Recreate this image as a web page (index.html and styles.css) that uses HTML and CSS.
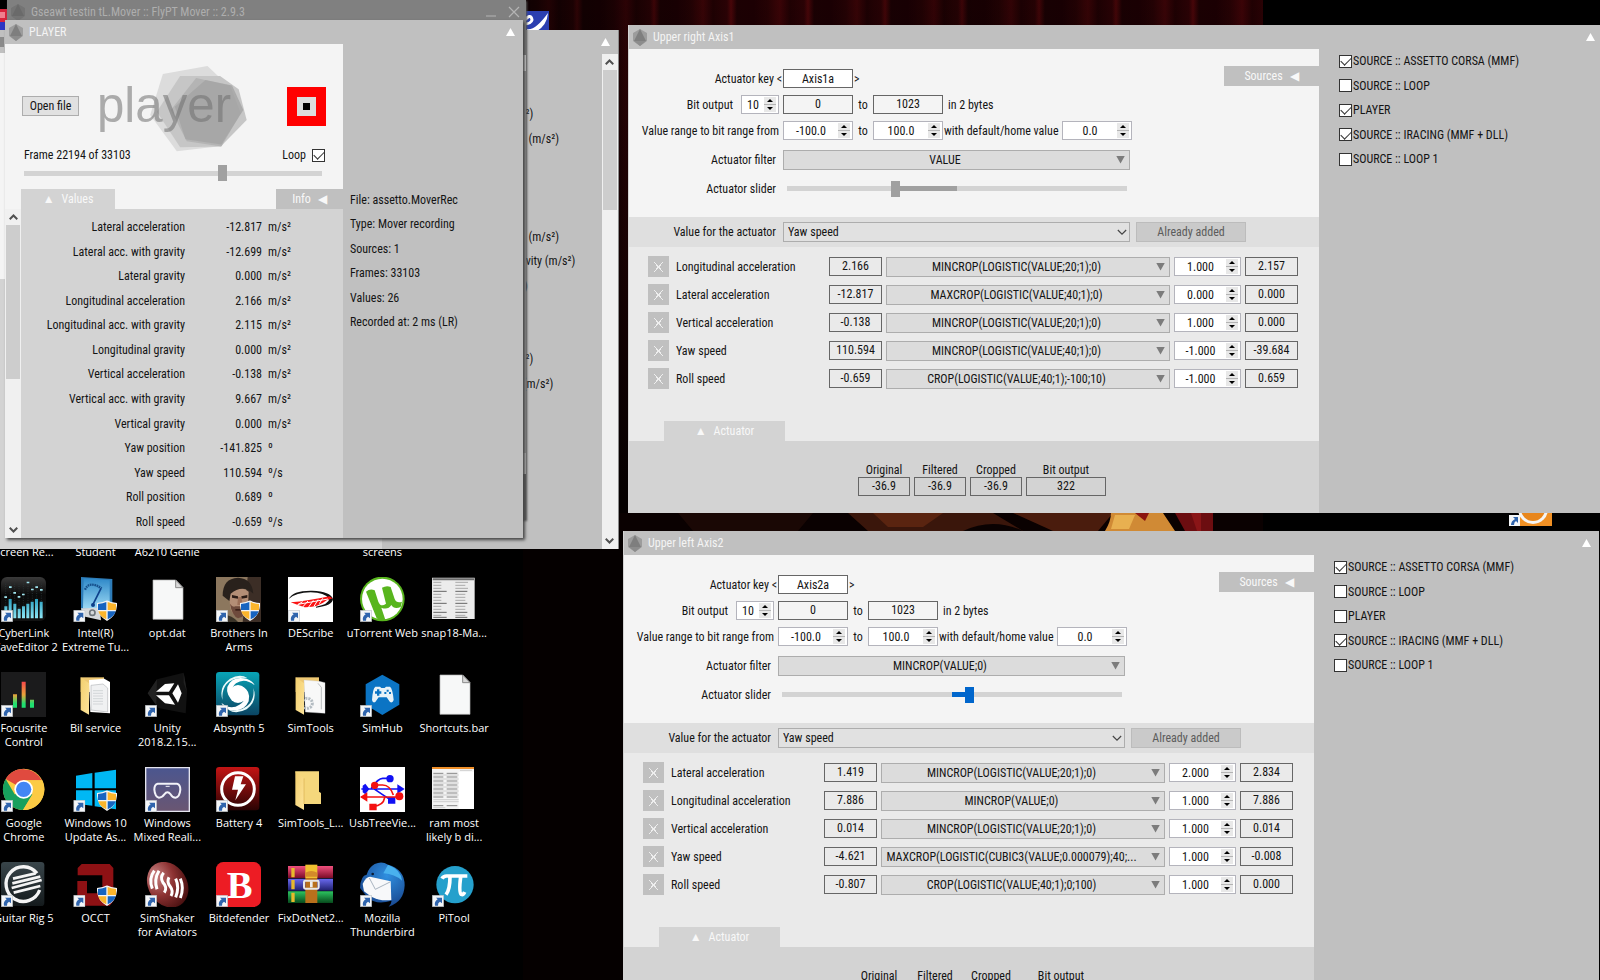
FILE: index.html
```html
<!DOCTYPE html>
<html lang="en">
<head>
<meta charset="utf-8">
<title>FlyPT Mover</title>
<link rel="stylesheet" href="styles.css">
</head>
<body>
<svg class="defs" aria-hidden="true">
  <defs>
    <linearGradient id="gDark" x1="0" y1="0" x2="0" y2="1"><stop offset="0" stop-color="#3a3a3a"/><stop offset=".4" stop-color="#0a0a0a"/><stop offset="1" stop-color="#111"/></linearGradient>
    <linearGradient id="gCyan" x1="0" y1="0" x2="0" y2="1"><stop offset="0" stop-color="#2aa0c0"/><stop offset="1" stop-color="#8fe6f5"/></linearGradient>
    <linearGradient id="gMeter" x1="0" y1="0" x2="0" y2="1"><stop offset="0" stop-color="#2e88c8"/><stop offset="1" stop-color="#9ad8f4"/></linearGradient>
    <linearGradient id="gLevel" gradientUnits="userSpaceOnUse" x1="0" y1="30" x2="0" y2="107"><stop offset="0" stop-color="#f84a4a"/><stop offset=".5" stop-color="#e8a33a"/><stop offset=".85" stop-color="#1ee070"/></linearGradient>
    <linearGradient id="gFolder" x1="0" y1="0" x2="1" y2="1"><stop offset="0" stop-color="#f3cf6e"/><stop offset="1" stop-color="#fde49a"/></linearGradient>
    <linearGradient id="gTeal" x1="0" y1="0" x2="0" y2="1"><stop offset="0" stop-color="#08a4b6"/><stop offset="1" stop-color="#0b4462"/></linearGradient>
    <linearGradient id="gMR" x1="0" y1="0" x2="0" y2="1"><stop offset="0" stop-color="#4b568f"/><stop offset="1" stop-color="#6a5672"/></linearGradient>
    <linearGradient id="gBatt" x1="0" y1="0" x2="0" y2="1"><stop offset="0" stop-color="#c41414"/><stop offset="1" stop-color="#2a0303"/></linearGradient>
    <linearGradient id="gRig" x1="0" y1="0" x2="0" y2="1"><stop offset="0" stop-color="#39454a"/><stop offset="1" stop-color="#141a1c"/></linearGradient>
    <radialGradient id="gShaker" cx=".35" cy=".2" r=".9"><stop offset="0" stop-color="#c98383"/><stop offset=".5" stop-color="#8c3232"/><stop offset="1" stop-color="#3c0a0a"/></radialGradient>
    <radialGradient id="gBird" cx=".6" cy=".3" r=".8"><stop offset="0" stop-color="#2f8fe0"/><stop offset="1" stop-color="#163f86"/></radialGradient>
    <linearGradient id="gBookR" x1="0" y1="0" x2="0" y2="1"><stop offset="0" stop-color="#f0507e"/><stop offset="1" stop-color="#7c0c28"/></linearGradient>
    <linearGradient id="gBookB" x1="0" y1="0" x2="0" y2="1"><stop offset="0" stop-color="#6a6af0"/><stop offset="1" stop-color="#20206e"/></linearGradient>
    <linearGradient id="gBookG" x1="0" y1="0" x2="0" y2="1"><stop offset="0" stop-color="#2cc460"/><stop offset="1" stop-color="#074a1c"/></linearGradient>
    <symbol id="hex" viewBox="0 0 16 17"><path d="M8 0 15 4V12L8 17 1 12V4z" fill="#9c9c9c"/><path d="M8 0 14 12H2z" fill="#7e7e7e"/><path d="M2 12H14L8 17z" fill="#8c8c8c"/></symbol>
    <symbol id="hexDark" viewBox="0 0 16 17"><path d="M8 0 15 4V12L8 17 1 12V4z" fill="#747474"/><path d="M8 0 14 12H2z" fill="#6a6a6a"/></symbol>
    <symbol id="link" viewBox="0 0 36 36"><path fill="#f4f6f8" stroke="#b8bcc2" stroke-width="2" d="M1 1H35V35H1z"/><path fill="#2f64ad" d="M12 8H30V25L24 20Q17 23 18 32H9Q6 20 17 13z"/></symbol>
    <symbol id="shield" viewBox="0 0 60 62"><path fill="#f4f4f4" d="M30 0Q44 8 60 8Q62 44 30 62Q-2 44 0 8Q16 8 30 0z"/><path fill="#1764c0" d="M28 5V29H3V11Q18 10 28 5z"/><path fill="#fbb52c" d="M32 5Q42 10 57 11V29H32z"/><path fill="#fbb52c" d="M4 33H28V57Q8 48 4 33z"/><path fill="#1764c0" d="M56 33H32V57Q52 48 56 33z"/></symbol>
    <symbol id="page" viewBox="0 0 135 135"><path d="M24 9H92L114 32V127H24z" fill="#f7f8f8" stroke="#b4b4b4" stroke-width="2"/><path d="M92 9V32H114z" fill="#d8d8d8" stroke="#8a8a8a" stroke-width="3"/></symbol>
    <symbol id="sheet" viewBox="0 0 135 135"><path fill="#ececec" d="M0 2H128V126H0z"/><path fill="#6f6f6f" d="M2 4H126V10H2z"/><path stroke="#aaa" stroke-width="3" stroke-dasharray="24 42 38 30" d="M4 16H120M4 25H100M4 34H120M4 52H100M4 61H100M4 70H100M4 88H100M4 97H100M4 115H100"/><path stroke="#666" stroke-width="3" stroke-dasharray="40 26 36 10" d="M4 43H110M4 79H110M4 106H110M4 121H110"/></symbol>
    <symbol id="up" viewBox="0 0 12 8"><path d="M1 7 6 2 11 7" fill="none" stroke="#505050" stroke-width="2.6"/></symbol>
    <symbol id="down" viewBox="0 0 12 8"><path d="M1 1 6 6 11 1" fill="none" stroke="#505050" stroke-width="2.6"/></symbol>
  </defs>
</svg>

<main class="desktop">
  <div class="drape"></div>
  <svg class="strip" viewBox="0 0 740 18" preserveAspectRatio="none" aria-hidden="true">
    <path fill="#0a0101" d="M0 0H740V18H0z"/><path fill="#1a0805" d="M155 0H290L275 18H170z"/><path fill="#3a160b" d="M325 0H470L500 18H345z"/><path fill="#5a2410" d="M350 0H420L400 14H365z"/><path fill="#4a1c0d" d="M490 0H590L575 18H530z"/><path fill="#0a0202" d="M440 18Q470 4 500 18z"/>
    <path fill="#d08a35" d="M588 0H640L652 18H582Q588 8 588 0z"/><path fill="#e8b050" d="M592 2H612L606 16H588z"/><path fill="#8b1510" d="M612 0H626L622 8z"/><path fill="#6c0d10" d="M652 0H690V18H662z"/><path fill="#8a1517" d="M668 0H678V18H674z"/>
  </svg>

  <svg class="stray-blue" viewBox="0 0 26 20" aria-hidden="true"><path fill="#2b3fb0" d="M0 0H26V20H0z"/><path d="M0 11Q8 1 9 9Q8 13 1 13" fill="none" stroke="#fff" stroke-width="3"/><path fill="#fff" d="M4 18Q12 20 25 2Q24 14 14 20H4z"/></svg>
  <svg class="stray-ball" viewBox="0 0 44 14" aria-hidden="true"><path fill="#f09024" d="M10 0H43V13H10z"/><circle cx="24" cy="-4" r="15" fill="#f5f5f5"/><circle cx="24" cy="-4" r="12" fill="#e8861c"/><path fill="#f4f6f8" d="M0 2H11V13H0z"/><path fill="#2f64ad" d="M4 4H9V10L7 8Q5 9 5 12H2Q2 8 6 6z"/></svg>

  <ul class="icons">
    <li><span>Screen Re...</span></li><li><span>Student</span></li><li><span>A6210 Genie</span></li><li></li><li></li><li><span>screens</span></li><li></li>

    <li><svg viewBox="0 0 135 135"><rect width="135" height="132" rx="18" fill="url(#gDark)"/><path stroke="#2e3c40" stroke-width="2" stroke-dasharray="3 4" d="M14 20V120M28 20V120M41 20V120M54 20V120M67 20V120M81 20V120M94 20V120M107 20V120M121 20V120"/><path fill="url(#gCyan)" d="M10 88h9v36h-9zM23 66h9v58h-9zM37 80h9v44h-9zM50 95h9v29h-9zM63 88h9v36h-9zM76 80h9v44h-9zM89 74h9v50h-9zM102 66h9v58h-9zM116 74h9v50h-9z"/><path fill="#9fe4ee" d="M10 58h8v5h-8zM24 28h8v5h-8zM37 45h8v5h-8zM50 57h8v5h-8zM63 50h8v5h-8zM77 14h8v5h-8zM90 35h8v5h-8zM103 28h8v5h-8zM117 36h8v5h-8z"/><use href="#link" y="99" width="36" height="36"/></svg><span>CyberLink WaveEditor 2</span></li>
    <li><svg viewBox="0 0 135 135"><path fill="#2d7cb8" d="M24 0 118 6V100L24 98z"/><path fill="url(#gMeter)" d="M32 4 110 10V92L30 94z"/><path d="M36 38Q48 10 86 34" fill="none" stroke="#16508c" stroke-width="7" stroke-dasharray="5 2"/><path stroke="#0d3f8a" stroke-width="5" d="M60 82 84 34"/><circle cx="60" cy="84" r="6" fill="#0d3f8a"/><path fill="#d6d9db" d="M24 94 80 92 84 130 30 118z"/><circle cx="58" cy="107" r="8" fill="none" stroke="#70777c" stroke-width="5"/><use href="#shield" x="72" y="70" width="60" height="62"/><use href="#link" x="1" y="99" width="36" height="36"/></svg><span>Intel(R) Extreme Tu...</span></li>
    <li><svg viewBox="0 0 135 135"><use href="#page" width="135" height="135"/></svg><span>opt.dat</span></li>
    <li><svg viewBox="0 0 135 135"><path fill="#8c775e" d="M0 0H135V135H0z"/><path fill="#3c2e26" d="M95 0H135V135H80z"/><path fill="#b48e76" d="M40 40Q70 24 98 44L96 90Q86 122 66 122Q46 112 42 88z"/><path fill="#6e4a3c" d="M42 80Q50 92 58 88H86L96 84Q90 122 66 124Q48 116 42 80z"/><path fill="#29211c" d="M20 56Q20 4 66 2Q108 4 112 50Q80 20 44 50L40 72z"/><path fill="#2c1c16" d="M48 54 66 58V65L48 62zM76 58 94 54V62L76 65z"/><path fill="#9c6f58" d="M66 60H76L80 84H64z"/><path fill="#3c2018" d="M58 96H84V101H58z"/><path fill="#3b3428" d="M20 112Q50 116 66 135H10z"/><use href="#shield" x="72" y="70" width="60" height="62"/><use href="#link" y="99" width="36" height="36"/></svg><span>Brothers In Arms</span></li>
    <li><svg viewBox="0 0 135 135"><path fill="#fff" d="M0 0H135V135H0z"/><path fill="#111" d="M2 66Q14 40 72 41Q128 43 135 66Q134 86 84 92V89Q122 82 124 66Q110 46 68 46Q24 46 2 66z"/><path fill="#fb1313" d="M8 76Q60 72 124 58L134 64 116 70Q90 92 50 91L30 84z"/><path stroke="#fff" stroke-width="3" d="M28 84 44 74M44 90 60 72M62 90 76 70M78 88 90 68M94 80 104 64M30 82 120 66"/><use href="#link" y="99" width="36" height="36"/></svg><span>DEScribe</span></li>
    <li><svg viewBox="0 0 135 135"><circle cx="67" cy="66" r="67" fill="#58b51e"/><circle cx="67" cy="66" r="61" fill="#fff"/><path fill="#58b51e" d="M18 44Q30 34 44 40L55 74Q62 92 78 80L66 32Q80 24 92 30L104 66Q110 80 126 74L122 90Q102 98 94 84Q84 100 64 92L76 128Q60 134 50 124z"/><use href="#link" y="99" width="36" height="36"/></svg><span>uTorrent Web</span></li>
    <li><svg viewBox="0 0 135 135"><use href="#sheet" width="135" height="135"/></svg><span>snap18-Ma...</span></li>

    <li><svg viewBox="0 0 135 135"><path fill="#1b1b1c" d="M0 0H135V135H0z"/><path fill="url(#gLevel)" d="M36 67h12v40H36zM62 29h12v78H62zM87 83h12v24H87z"/><use href="#link" y="99" width="36" height="36"/></svg><span>Focusrite Control</span></li>
    <li><svg viewBox="0 0 135 135"><path fill="#eec873" d="M23 16H93V60H23z"/><path fill="#fff" d="M48 24 94 20 111 30V124L52 120z"/><path fill="#f0f1f2" stroke="#b5b8bb" stroke-width="2" d="M54 40 90 36 104 48V120L54 114z"/><path stroke="#c4c8cb" stroke-width="2" d="M60 56H90M60 64H90M60 72H90M60 80H90M60 88H90M60 96H90"/><path fill="url(#gFolder)" d="M23 16 48 34V128L23 114z"/></svg><span>Bil service</span></li>
    <li><svg viewBox="0 0 135 135"><path fill="#111" d="M8 64 36 22 116 2 126 60 122 124 40 108z"/><path fill="#222" d="M8 64 36 22 34 100zM116 2 126 60 116 32z"/><path fill="#fff" d="M33 59 60 36 88 34 72 59zM33 70H72L90 98 60 94zM99 37 110 64 99 92 82 64z"/><use href="#link" y="99" width="36" height="36"/></svg><span>Unity 2018.2.15...</span></li>
    <li><svg viewBox="0 0 135 135"><rect width="130" height="130" rx="10" fill="url(#gTeal)"/><circle cx="66" cy="66" r="27" fill="#fff"/><path d="M58 90Q28 72 34 45Q48 10 92 20Q112 28 116 40Q86 16 60 34Q44 46 48 68zM76 42Q106 56 98 88Q84 122 40 114Q22 106 16 92Q44 116 70 98Q88 88 86 68z" fill="#fff"/><path d="M20 84Q6 46 42 20Q72 4 94 18Q52 12 30 38Q16 58 20 84zM112 48Q126 86 92 112Q60 128 38 114Q80 120 102 94Q116 74 112 48z" fill="#eafafa"/><use href="#link" y="99" width="36" height="36"/></svg><span>Absynth 5</span></li>
    <li><svg viewBox="0 0 135 135"><path fill="#eec873" d="M23 16H93V60H23z"/><path fill="#f8f8f8" stroke="#c9cccf" d="M48 24 94 28 111 32V124L52 120z"/><path fill="none" stroke="#9a9ea1" stroke-width="2" d="M90 34 100 46V112"/><circle cx="58" cy="94" r="15" fill="none" stroke="#b4bcc2" stroke-width="9" stroke-dasharray="6 3"/><path fill="url(#gFolder)" d="M23 16 48 34V128L23 114z"/></svg><span>SimTools</span></li>
    <li><svg viewBox="0 0 135 135"><path fill="#0b74c4" d="M67 8 118 37V98L67 129 17 98V37z"/><path fill="#e8f2f8" d="M46 44H60L64 48H74L78 44H90Q98 50 101 84Q98 94 90 90L80 76H56L46 90Q38 94 36 84Q38 50 46 44z"/><path fill="#0b74c4" d="M51 52h7v6h6v7h-6v6h-7v-6h-6v-7h6zM80 53h6v6h-6zM87 60h6v6h-6zM73 60h6v6h-6z"/><use href="#link" y="99" width="36" height="36"/></svg><span>SimHub</span></li>
    <li><svg viewBox="0 0 135 135"><use href="#page" width="135" height="135"/></svg><span>Shortcuts.bar</span></li>

    <li><svg viewBox="0 0 135 135"><circle cx="68" cy="67" r="62" fill="#fccb44"/><path fill="#e04a3f" d="M68 67 14 36A62 62 0 0 1 122 40H68z"/><path fill="#17a05d" d="M41 82 14 36A62 62 0 0 0 66 129L96 82z"/><path fill="#fccb44" d="M68 40H124A62 62 0 0 1 66 129L94 82z"/><circle cx="68" cy="67" r="28" fill="#fff"/><circle cx="68" cy="67" r="23" fill="#4286f4"/><use href="#link" y="99" width="36" height="36"/></svg><span>Google Chrome</span></li>
    <li><svg viewBox="0 0 135 135"><path fill="#00b8f4" d="M9 26 58 18V64H9zM65 17 129 8V64H65zM9 70H58V116L9 110zM65 70H129V127L65 118z"/><use href="#shield" x="72" y="70" width="60" height="62"/><use href="#link" x="1" y="99" width="36" height="36"/></svg><span>Windows 10 Update As...</span></li>
    <li><svg viewBox="0 0 135 135"><path fill="url(#gMR)" stroke="#e4e4ee" stroke-width="4" d="M2 2H133V133H2z"/><path d="M38 50H96Q106 52 106 68Q104 90 92 92Q82 92 77 82Q67 70 58 82Q52 92 42 92Q30 90 28 68Q28 52 38 50z" fill="none" stroke="#f2f2f8" stroke-width="6"/><path stroke="#f2f2f8" stroke-width="3" d="M62 58H74"/><use href="#link" y="99" width="36" height="36"/></svg><span>Windows Mixed Reali...</span></li>
    <li><svg viewBox="0 0 135 135"><rect width="130" height="130" rx="10" fill="url(#gBatt)"/><circle cx="66" cy="66" r="49" fill="none" stroke="#fff" stroke-width="9"/><path fill="#fff" d="M57 28H82L74 52H90L58 100L66 68H48z"/><use href="#link" y="99" width="36" height="36"/></svg><span>Battery 4</span></li>
    <li><svg viewBox="0 0 135 135"><path fill="#f5d77c" d="M22 13H93V74L99 78V111H46z"/><path fill="url(#gFolder)" d="M22 13 48 34V129L22 114z"/><path stroke="#d9b04e" stroke-width="2" d="M48 34V111"/></svg><span>SimTools_L...</span></li>
    <li><svg viewBox="0 0 135 135"><path fill="#fff" d="M0 0H135V135H0z"/><path fill="none" stroke="#1010f4" stroke-width="5" d="M4 66H128M34 64Q54 34 68 34H90M40 64Q66 82 94 100"/><path fill="#1010f4" d="M8 56 16 50 28 66 16 82 8 76zM112 52 134 66 112 80zM84 90h22v20H84z"/><circle cx="90" cy="35" r="11" fill="#1010f4"/><path fill="none" stroke="#f41010" stroke-width="5" d="M4 90H120M44 54H68Q90 54 100 84M74 92Q70 116 40 118"/><path fill="#f41010" d="M0 90 22 76V104zM28 110h22v20H28z"/><circle cx="44" cy="55" r="11" fill="#f41010"/><circle cx="118" cy="88" r="12" fill="#f41010"/></svg><span>UsbTreeVie...</span></li>
    <li><svg viewBox="0 0 135 135"><path fill="#f4f4f4" d="M0 0H126V126H0z"/><path fill="#f0902a" d="M0 0H126V6H0z"/><path fill="#fff" d="M80 14H126V126H80z"/><path stroke="#888" stroke-width="3" stroke-dasharray="30 10 32 6" d="M4 19H80M4 30H80M4 42H80M4 54H80M4 66H80M4 78H80M4 90H80M4 116H80"/><path stroke="#bbb" stroke-width="2" d="M4 24H80M4 36H80M4 48H80M4 60H80M4 72H80M4 84H80M4 98H80M4 104H80M4 122H40M84 10H120"/></svg><span>ram most likely b di...</span></li>

    <li><svg viewBox="0 0 135 135"><rect width="130" height="132" rx="10" fill="url(#gRig)"/><path d="M108 34A52 52 0 1 0 116 84" fill="none" stroke="#f4f4f4" stroke-width="10"/><path stroke="#f4f4f4" stroke-width="8" d="M36 50 104 34M34 64 118 44M32 78 122 54M38 92 118 72"/><use href="#link" y="99" width="36" height="36"/></svg><span>Guitar Rig 5</span></li>
    <li><svg viewBox="0 0 135 135"><path fill="#8e1114" d="M26 6H110L121 18V118L110 131H26L13 118V57H42V94H88V40H14V18z"/><use href="#shield" x="72" y="70" width="60" height="62"/><use href="#link" x="1" y="99" width="36" height="36"/></svg><span>OCCT</span></li>
    <li><svg viewBox="0 0 135 135"><ellipse cx="68" cy="68" rx="58" ry="72" transform="rotate(-32 68 68)" fill="url(#gShaker)"/><path d="M28 26Q10 50 22 80M42 26Q26 52 36 82M56 32Q44 46 54 62Q68 76 58 92M72 46Q64 60 76 74Q86 88 78 102M92 50Q104 76 92 106M106 50Q118 78 106 108" fill="none" stroke="#fff" stroke-width="9"/><use href="#link" y="99" width="36" height="36"/></svg><span>SimShaker<br>for Aviators</span></li>
    <li><svg viewBox="0 0 135 135"><rect width="135" height="135" rx="22" fill="#ed1c24"/><text x="32" y="108" font-family="'Liberation Serif',serif" font-weight="bold" font-size="116" fill="#fff">B</text><use href="#link" y="99" width="36" height="36"/></svg><span>Bitdefender</span></li>
    <li><svg viewBox="0 0 135 135"><path fill="url(#gBookR)" d="M0 12H135V48H0z"/><path fill="url(#gBookB)" d="M0 50H135V86H0z"/><path fill="url(#gBookG)" d="M0 88H135V123H0z"/><path fill="#e8b92c" d="M10 18h10v28H10zM10 54h10v28H10zM10 92h10v28H10z"/><path fill="#f0c030" d="M52 8H88V48H52z"/><path fill="#b8701c" d="M52 48H88V123H52z"/><path fill="#d48a2a" d="M52 32Q70 22 88 32V44H52z"/><rect x="48" y="56" width="44" height="24" rx="4" fill="none" stroke="#e8e8e8" stroke-width="6"/><path fill="#eee" d="M66 58h8v18h-8z"/></svg><span>FixDotNet2...</span></li>
    <li><svg viewBox="0 0 135 135"><path fill="url(#gBird)" d="M44 6Q66-4 84 8Q134 22 134 70Q132 120 86 134Q96 122 94 116Q50 130 24 108L0 78Q2 40 20 38Q26 16 44 6z"/><path fill="#49b1ee" d="M84 8Q124 24 126 56Q104 36 70 34z"/><path fill="#f7f8fa" d="M8 66Q18 44 30 44L92 58 94 114Q60 118 34 104L12 88z"/><path d="M28 48 46 82 90 60" fill="none" stroke="#a9b4c0" stroke-width="3"/><circle cx="38" cy="36" r="4" fill="#0c1c34"/><use href="#link" y="99" width="36" height="36"/></svg><span>Mozilla Thunderbird</span></li>
    <li><svg viewBox="0 0 135 135"><circle cx="69" cy="68" r="56" fill="#25a0cc"/><path d="M30 50Q34 42 44 42H106M54 44Q54 82 42 98M86 44Q80 92 88 97Q94 100 98 90" fill="none" stroke="#fff" stroke-width="11"/><use href="#link" y="99" width="36" height="36"/></svg><span>PiTool</span></li>
  </ul>

  <section class="back-window" aria-label="Source window">
    <div class="back-left"></div>
    <div class="back-body">
      <ul class="clipped">
        <li>s²)</li><li>n (m/s²)</li><li></li><li></li><li>)</li><li>n (m/s²)</li><li>avity (m/s²)</li><li>²)</li><li></li><li></li><li>s²)</li><li> (m/s²)</li>
      </ul>
    </div>
    <div class="back-side">
      <span class="tri-up"></span>
      <div class="scrollbar"><svg><use href="#up"/></svg><i class="short"></i><svg><use href="#down"/></svg></div>
    </div>
  </section>
  <svg class="stray-edge" viewBox="0 0 8 60" aria-hidden="true"><path fill="#000" d="M0 0H8V30H0z"/><path fill="#d8233c" d="M0 9H8V24H0z"/><path fill="#ef7f8e" d="M0 12H5V18H0z"/><path fill="#2c34c4" d="M0 22H8V30H0z"/><path fill="#8a8a8a" d="M0 37H4V47H0z"/></svg>

  <section class="main-window" aria-label="FlyPT Mover">
    <header><svg class="hex"><use href="#hexDark"/></svg><h1>Gseawt testin tL.Mover :: FlyPT Mover :: 2.9.3</h1><svg class="caption" viewBox="0 0 34 12"><path d="M0 10H10M23 1 33 11M33 1 23 11" fill="none" stroke="#b4b4b4" stroke-width="1.2"/></svg></header>
    <div class="main-body"></div>
    <div class="main-foot"></div>
  </section>

  <section class="player" aria-label="Player">
    <header class="title"><svg class="hex"><use href="#hex"/></svg><h2>PLAYER</h2><span class="tri-up"></span></header>
    <div class="player-cols">
      <div class="player-left">
        <div class="deck">
          <button class="open">Open file</button>
          <svg class="logo" viewBox="290 183 460 270" role="img" aria-label="player"><path fill="#dcdcdc" d="M488 222 622 198 720 290 665 438 530 454 450 345z"/><path fill="#c6c6c6" d="M540 228H660L716 268 740 360 662 440 540 442 470 335z"/><path fill="#b4b4b4" d="M588 234 690 256 722 340 664 440 560 424 512 330z"/><path fill="#a4a4a4" d="M616 240 696 256 730 330 664 434 556 418 524 320z" opacity=".8"/><text x="290" y="367" font-family="'Liberation Sans',sans-serif" font-size="148" fill="#707070" fill-opacity=".55">player</text></svg>
          <button class="stop" aria-label="Stop"><span></span></button>
        </div>
        <div class="frame-row"><span>Frame 22194 of 33103</span><label>Loop <input type="checkbox" checked></label></div>
        <input class="slider seek" type="range" min="0" max="33103" value="22194" aria-label="Frame">
        <div class="tabs"><button class="tab values">▲<span>Values</span></button><button class="tab info"><span>Info</span>◀</button></div>
        <div class="values-wrap">
          <div class="scrollbar"><svg><use href="#up"/></svg><i></i><svg><use href="#down"/></svg></div>
          <table class="values-table">
            <tr><th>Lateral acceleration</th><td>-12.817</td><td>m/s²</td></tr>
            <tr><th>Lateral acc. with gravity</th><td>-12.699</td><td>m/s²</td></tr>
            <tr><th>Lateral gravity</th><td>0.000</td><td>m/s²</td></tr>
            <tr><th>Longitudinal acceleration</th><td>2.166</td><td>m/s²</td></tr>
            <tr><th>Longitudinal acc. with gravity</th><td>2.115</td><td>m/s²</td></tr>
            <tr><th>Longitudinal gravity</th><td>0.000</td><td>m/s²</td></tr>
            <tr><th>Vertical acceleration</th><td>-0.138</td><td>m/s²</td></tr>
            <tr><th>Vertical acc. with gravity</th><td>9.667</td><td>m/s²</td></tr>
            <tr><th>Vertical gravity</th><td>0.000</td><td>m/s²</td></tr>
            <tr><th>Yaw position</th><td>-141.825</td><td>º</td></tr>
            <tr><th>Yaw speed</th><td>110.594</td><td>º/s</td></tr>
            <tr><th>Roll position</th><td>0.689</td><td>º</td></tr>
            <tr><th>Roll speed</th><td>-0.659</td><td>º/s</td></tr>
          </table>
        </div>
      </div>
      <ul class="info-list"><li>File: assetto.MoverRec</li><li>Type: Mover recording</li><li>Sources: 1</li><li>Frames: 33103</li><li>Values: 26</li><li>Recorded at: 2 ms (LR)</li></ul>
    </div>
  </section>

  <section class="axis axis-one" aria-label="Upper right Axis1">
    <header class="title"><svg class="hex"><use href="#hex"/></svg><h2>Upper right Axis1</h2><span class="tri-up"></span></header>
    <div class="axis-cols">
      <div class="axis-main">
        <div class="form">
          <div class="line"><label class="lab tight" for="k1">Actuator key &lt;</label><input class="box white" id="k1" value="Axis1a"><span class="gt">&gt;</span></div>
          <div class="line"><div class="lab bits"><label for="b1">Bit output</label><span class="spin mini"><input id="b1" value="10"><span class="btns"><button aria-label="Up"></button><button aria-label="Down"></button></span></span></div><output class="box">0</output><span class="to">to</span><output class="box">1023</output><span class="after">in 2 bytes</span></div>
          <div class="line"><label class="lab near" for="f1">Value range to bit range from</label><span class="spin"><input id="f1" value="-100.0"><span class="btns"><button aria-label="Up"></button><button aria-label="Down"></button></span></span><label class="to" for="t1">to</label><span class="spin"><input id="t1" value="100.0"><span class="btns"><button aria-label="Up"></button><button aria-label="Down"></button></span></span><label class="after home" for="h1">with default/home value</label><span class="spin"><input id="h1" value="0.0"><span class="btns"><button aria-label="Up"></button><button aria-label="Down"></button></span></span></div>
          <div class="line gap"><label class="lab" for="a1">Actuator filter</label><span class="filter wide"><select id="a1"><option>VALUE</option></select></span></div>
          <div class="line gap"><label class="lab" for="s1">Actuator slider</label><input class="slider act grey" id="s1" type="range" min="0" max="1023" value="322"></div>
          <button class="tab sources"><span>Sources</span>◀</button>
        </div>
        <div class="band"><label class="lab" for="v1">Value for the actuator</label><span class="pick wide"><select id="v1"><option>Yaw speed</option></select><svg viewBox="0 0 12 8"><path d="M1 1 6 6 11 1" fill="none" stroke="#444" stroke-width="1.4"/></svg></span><button class="added">Already added</button></div>
        <div class="rows">
          <div class="row"><button class="del" aria-label="Remove"></button><span class="name">Longitudinal acceleration</span><output class="box">2.166</output><span class="filter"><select aria-label="Filter"><option>MINCROP(LOGISTIC(VALUE;20;1);0)</option></select></span><span class="spin"><input aria-label="Factor" value="1.000"><span class="btns"><button aria-label="Up"></button><button aria-label="Down"></button></span></span><output class="box">2.157</output></div>
          <div class="row"><button class="del" aria-label="Remove"></button><span class="name">Lateral acceleration</span><output class="box">-12.817</output><span class="filter"><select aria-label="Filter"><option>MAXCROP(LOGISTIC(VALUE;40;1);0)</option></select></span><span class="spin"><input aria-label="Factor" value="0.000"><span class="btns"><button aria-label="Up"></button><button aria-label="Down"></button></span></span><output class="box">0.000</output></div>
          <div class="row"><button class="del" aria-label="Remove"></button><span class="name">Vertical acceleration</span><output class="box">-0.138</output><span class="filter"><select aria-label="Filter"><option>MINCROP(LOGISTIC(VALUE;20;1);0)</option></select></span><span class="spin"><input aria-label="Factor" value="1.000"><span class="btns"><button aria-label="Up"></button><button aria-label="Down"></button></span></span><output class="box">0.000</output></div>
          <div class="row"><button class="del" aria-label="Remove"></button><span class="name">Yaw speed</span><output class="box">110.594</output><span class="filter"><select aria-label="Filter"><option>MINCROP(LOGISTIC(VALUE;40;1);0)</option></select></span><span class="spin"><input aria-label="Factor" value="-1.000"><span class="btns"><button aria-label="Up"></button><button aria-label="Down"></button></span></span><output class="box">-39.684</output></div>
          <div class="row"><button class="del" aria-label="Remove"></button><span class="name">Roll speed</span><output class="box">-0.659</output><span class="filter"><select aria-label="Filter"><option>CROP(LOGISTIC(VALUE;40;1);-100;10)</option></select></span><span class="spin"><input aria-label="Factor" value="-1.000"><span class="btns"><button aria-label="Up"></button><button aria-label="Down"></button></span></span><output class="box">0.659</output></div>
          <button class="tab actuator">▲<span>Actuator</span></button>
        </div>
        <div class="foot"><div class="stat">Original<output class="box">-36.9</output></div><div class="stat">Filtered<output class="box">-36.9</output></div><div class="stat">Cropped<output class="box">-36.9</output></div><div class="stat big">Bit output<output class="box">322</output></div></div>
      </div>
      <div class="checks"><label><input type="checkbox" checked>SOURCE :: ASSETTO CORSA (MMF)</label><label><input type="checkbox">SOURCE :: LOOP</label><label><input type="checkbox" checked>PLAYER</label><label><input type="checkbox" checked>SOURCE :: IRACING (MMF + DLL)</label><label><input type="checkbox">SOURCE :: LOOP 1</label></div>
    </div>
  </section>

  <section class="axis axis-two" aria-label="Upper left Axis2">
    <header class="title"><svg class="hex"><use href="#hex"/></svg><h2>Upper left Axis2</h2><span class="tri-up"></span></header>
    <div class="axis-cols">
      <div class="axis-main">
        <div class="form">
          <div class="line"><label class="lab tight" for="k2">Actuator key &lt;</label><input class="box white" id="k2" value="Axis2a"><span class="gt">&gt;</span></div>
          <div class="line"><div class="lab bits"><label for="b2">Bit output</label><span class="spin mini"><input id="b2" value="10"><span class="btns"><button aria-label="Up"></button><button aria-label="Down"></button></span></span></div><output class="box">0</output><span class="to">to</span><output class="box">1023</output><span class="after">in 2 bytes</span></div>
          <div class="line"><label class="lab near" for="f2">Value range to bit range from</label><span class="spin"><input id="f2" value="-100.0"><span class="btns"><button aria-label="Up"></button><button aria-label="Down"></button></span></span><label class="to" for="t2">to</label><span class="spin"><input id="t2" value="100.0"><span class="btns"><button aria-label="Up"></button><button aria-label="Down"></button></span></span><label class="after home" for="h2">with default/home value</label><span class="spin"><input id="h2" value="0.0"><span class="btns"><button aria-label="Up"></button><button aria-label="Down"></button></span></span></div>
          <div class="line gap"><label class="lab" for="a2">Actuator filter</label><span class="filter wide"><select id="a2"><option>MINCROP(VALUE;0)</option></select></span></div>
          <div class="line gap"><label class="lab" for="s2">Actuator slider</label><input class="slider act blue" id="s2" type="range" min="0" max="1023" value="567"></div>
          <button class="tab sources"><span>Sources</span>◀</button>
        </div>
        <div class="band"><label class="lab" for="v2">Value for the actuator</label><span class="pick wide"><select id="v2"><option>Yaw speed</option></select><svg viewBox="0 0 12 8"><path d="M1 1 6 6 11 1" fill="none" stroke="#444" stroke-width="1.4"/></svg></span><button class="added">Already added</button></div>
        <div class="rows">
          <div class="row"><button class="del" aria-label="Remove"></button><span class="name">Lateral acceleration</span><output class="box">1.419</output><span class="filter"><select aria-label="Filter"><option>MINCROP(LOGISTIC(VALUE;20;1);0)</option></select></span><span class="spin"><input aria-label="Factor" value="2.000"><span class="btns"><button aria-label="Up"></button><button aria-label="Down"></button></span></span><output class="box">2.834</output></div>
          <div class="row"><button class="del" aria-label="Remove"></button><span class="name">Longitudinal acceleration</span><output class="box">7.886</output><span class="filter"><select aria-label="Filter"><option>MINCROP(VALUE;0)</option></select></span><span class="spin"><input aria-label="Factor" value="1.000"><span class="btns"><button aria-label="Up"></button><button aria-label="Down"></button></span></span><output class="box">7.886</output></div>
          <div class="row"><button class="del" aria-label="Remove"></button><span class="name">Vertical acceleration</span><output class="box">0.014</output><span class="filter"><select aria-label="Filter"><option>MINCROP(LOGISTIC(VALUE;20;1);0)</option></select></span><span class="spin"><input aria-label="Factor" value="1.000"><span class="btns"><button aria-label="Up"></button><button aria-label="Down"></button></span></span><output class="box">0.014</output></div>
          <div class="row"><button class="del" aria-label="Remove"></button><span class="name">Yaw speed</span><output class="box">-4.621</output><span class="filter"><select aria-label="Filter"><option>MAXCROP(LOGISTIC(CUBIC3(VALUE;0.000079);40;...</option></select></span><span class="spin"><input aria-label="Factor" value="1.000"><span class="btns"><button aria-label="Up"></button><button aria-label="Down"></button></span></span><output class="box">-0.008</output></div>
          <div class="row"><button class="del" aria-label="Remove"></button><span class="name">Roll speed</span><output class="box">-0.807</output><span class="filter"><select aria-label="Filter"><option>CROP(LOGISTIC(VALUE;40;1);0;100)</option></select></span><span class="spin"><input aria-label="Factor" value="1.000"><span class="btns"><button aria-label="Up"></button><button aria-label="Down"></button></span></span><output class="box">0.000</output></div>
          <button class="tab actuator">▲<span>Actuator</span></button>
        </div>
        <div class="foot"><div class="stat">Original</div><div class="stat">Filtered</div><div class="stat">Cropped</div><div class="stat big">Bit output</div></div>
      </div>
      <div class="checks"><label><input type="checkbox" checked>SOURCE :: ASSETTO CORSA (MMF)</label><label><input type="checkbox">SOURCE :: LOOP</label><label><input type="checkbox">PLAYER</label><label><input type="checkbox" checked>SOURCE :: IRACING (MMF + DLL)</label><label><input type="checkbox">SOURCE :: LOOP 1</label></div>
    </div>
  </section>
</main>
</body>
</html>
```
FILE: styles.css
```css
* { box-sizing: border-box; }

body {
  margin: 0;
  background: #000;
  color: #141414;
  font: 12px/14px "Roboto Condensed", "Liberation Sans", sans-serif;
}

button, input, select, output { font: inherit; color: inherit; }
button { padding: 0; border: 0; background: none; }
h1, h2, ul, p { margin: 0; padding: 0; font: inherit; }
ul { list-style: none; }
.defs { position: absolute; width: 0; height: 0; }

/* desktop */
.desktop { position: relative; height: 100vh; overflow: hidden; background: #000; }
.drape {
  position: absolute; left: 523px; top: 0; width: 740px; height: 100%;
  background:
    linear-gradient(180deg, transparent 0, #050000 500px),
    linear-gradient(90deg, rgba(0,0,0,.5), transparent 30%, rgba(0,0,0,.2) 60%, transparent),
    repeating-linear-gradient(90deg, #1c0003 0, #260204 14px, #3c0407 26px, #200103 36px, #2c0205 50px, #4a0609 54px, #1c0103 60px, #1c0003 77px);
}
.strip { position: absolute; left: 523px; top: 513px; width: 740px; height: 18px; }
.stray-blue { position: absolute; left: 523px; top: 11px; width: 26px; height: 20px; }
.stray-ball { position: absolute; left: 1509px; top: 513px; width: 44px; height: 14px; }
.stray-edge { position: absolute; left: 0; top: 0; width: 8px; height: 60px; }

.icons {
  position: absolute; left: -12px; top: 545px; width: 502px;
  display: grid; grid-template-columns: repeat(7, minmax(0, 1fr));
  grid-template-rows: 32px repeat(4, 95px);
  color: #fff; font: 11px/14px "Open Sans", "Noto Sans", sans-serif;
  text-align: center;
}
.icons li { display: flex; flex-direction: column; align-items: center; gap: 4px; }
.icons svg { width: 45px; height: 45px; }
.icons span { width: 72px; text-shadow: 0 1px 1px #000; }

.title { display: flex; align-items: center; gap: 5px; height: 24px; padding: 0 8px 0 3px; background: #c0c0c0; color: #f4f4f4; }
.hex { width: 16px; height: 17px; }
.tri-up { margin-left: auto; width: 9px; height: 8px; background: #fff; clip-path: polygon(50% 0, 100% 100%, 0 100%); }

.scrollbar { display: flex; flex-direction: column; width: 16px; background: #f0f0f0; }
.scrollbar svg { width: 9px; height: 6px; margin: 5px auto; }
.scrollbar svg:last-child { margin-top: auto; }
.scrollbar i { height: 154px; margin: 0 1px; background: #cdcdcd; }
.scrollbar .short { height: 140px; }

/* window behind the player */
.back-window { position: absolute; left: 0; top: 30px; width: 619px; height: 519px; display: flex; background: #c0c0c0; border-right: 1px solid #8a8a8a; }
.back-left { width: 382px; background: linear-gradient(#c0c0c0 23px, #f4f4f4 23px 249px, #d3d3d3 249px); }
.back-body { flex: 1; }
.back-side { width: 17px; display: flex; flex-direction: column; align-items: center; padding-top: 8px; gap: 8px; }
.back-side .tri-up { margin: 0; align-self: flex-start; }
.back-side .scrollbar { flex: 1; }
.clipped { height: 284px; margin: 77px 0 0 138px; display: flex; flex-direction: column; justify-content: space-between; white-space: pre; }
.clipped li { height: 14px; }

/* application window, mostly covered */
.main-window { position: absolute; left: 7px; top: 0; width: 519px; height: 520px; display: flex; flex-direction: column; background: #808080; box-shadow: 1px 1px 2px #555; }
.main-window header { display: flex; align-items: center; gap: 5px; height: 24px; padding: 0 6px 0 3px; color: #aeaeae; }
.caption { width: 34px; height: 12px; margin-left: auto; }
.main-window h1 { font-size: 12px; }
.main-body { flex: 1; margin-top: 31px; background: linear-gradient(#e8e8e8 16px, #969696 16px 398px, #c0c0c0 398px); }
.main-foot { height: 46px; background: #5c5c5c; }

/* player */
.player { position: absolute; left: 5px; top: 20px; width: 518px; height: 518px; display: flex; flex-direction: column; background: #c0c0c0; box-shadow: 2px 2px 3px #444; }
.player-cols { flex: 1; display: flex; }
.player-left { width: 338px; display: flex; flex-direction: column; background: #f4f4f4; }
.deck { display: flex; align-items: center; height: 104px; padding: 20px 17px 0; }
.open { width: 57px; height: 20px; border: 1px solid #adadad; background: #e1e1e1; }
.logo { width: 153px; height: 90px; margin-left: 18px; overflow: visible; }
.stop { width: 39px; height: 39px; margin-left: auto; display: grid; place-items: center; background: #f00; }
.stop span { width: 19px; height: 19px; border: 6px solid #ddd; background: #000; }
.frame-row { display: flex; justify-content: space-between; padding: 0 18px 0 19px; }
.frame-row label { display: flex; align-items: center; gap: 6px; }

input[type="checkbox"] { appearance: none; width: 13px; height: 13px; margin: 0; border: 1px solid #333; background: #fff; display: grid; place-items: center; }
input[type="checkbox"]:checked::before { content: ""; width: 9px; height: 5px; margin-bottom: 2px; border: solid #333; border-width: 0 0 1px 1px; transform: rotate(-45deg); }

.slider { appearance: none; height: 16px; margin: 0; background: linear-gradient(#d3d3d3, #d3d3d3) center / 100% 5px no-repeat; }
.slider::-webkit-slider-thumb { appearance: none; width: 9px; height: 16px; background: #a0a0a0; }
.seek { margin: 3px 21px 0 19px; }
.act { width: 340px; margin-left: 4px; }
.grey { background: linear-gradient(90deg, #d3d3d3 31%, #a0a0a0 31% 50%, #d3d3d3 50%) center / 100% 5px no-repeat; }
.blue { background: linear-gradient(90deg, #d3d3d3 50%, #0066cc 50% 55%, #d3d3d3 55%) center / 100% 5px no-repeat; }
.blue::-webkit-slider-thumb { background: #0066cc; }

.tab { height: 20px; display: flex; align-items: center; justify-content: center; gap: 7px; color: #f8f8f8; font-size: 12px; }
.tabs { display: flex; justify-content: space-between; margin-top: 8px; padding-left: 16px; }
.values { width: 94px; background: #d3d3d3; }
.info { width: 67px; background: #c0c0c0; }
.values-wrap { flex: 1; display: flex; background: #d3d3d3; }
.values-table { flex: 1; height: 319px; margin-top: 6px; border-collapse: collapse; }
.values-table th, .values-table td { padding: 0; font-weight: inherit; text-align: right; }
.values-table th { width: 164px; }
.values-table td { width: 77px; }
.values-table td:last-child { width: auto; padding-left: 6px; text-align: left; }
.info-list { height: 136px; margin: 149px 0 0 7px; display: flex; flex-direction: column; justify-content: space-between; }

/* axis windows */
.axis { position: absolute; border-left: 1px solid #d3d3d3; background: #c0c0c0; }
.axis-one { left: 628px; right: -3px; top: 25px; }
.axis-two { left: 623px; right: 1px; top: 531px; }
.axis-cols { display: flex; }
.axis-main { width: 690px; background: #eaeaea; }
.form { position: relative; height: 168px; padding-top: 20px; background: #f4f4f4; }
.line { display: flex; align-items: center; height: 19px; margin-bottom: 7px; }
.line.gap { margin: 10px 0; }
.lab { width: 154px; padding-right: 7px; text-align: right; }
.tight { padding-right: 1px; }
.near { padding-right: 4px; }
.bits { display: flex; justify-content: flex-end; align-items: center; gap: 8px; padding-right: 4px; }
.box { width: 70px; height: 19px; border: 1px solid #666; background: none; text-align: center; line-height: 17px; }
.white { padding: 0; background: #fff; }
.gt { padding-left: 1px; }
.to { width: 20px; text-align: center; }
.after { padding-left: 5px; }
.home { width: 119px; padding-left: 1px; white-space: nowrap; }
.spin { display: flex; width: 70px; height: 19px; padding: 1px 2px 1px 0; border: 1px solid #b4b4bc; background: #fff; }
.spin input { flex: 1; width: 0; padding: 0; border: 0; background: none; text-align: center; line-height: 14px; }
.mini { width: 38px; }
.btns { display: flex; flex-direction: column; justify-content: space-between; width: 12px; background: #b4b4b4; }
.btns button { height: 7px; display: grid; place-items: center; background: #e8e8e8; }
.btns button::before { content: ""; width: 6px; height: 3px; background: #000; clip-path: polygon(50% 0, 100% 100%, 0 100%); }
.btns button:last-child::before { clip-path: polygon(0 0, 100% 0, 50% 100%); }
.filter, .pick { position: relative; width: 284px; height: 20px; }
.wide { width: 347px; }
.filter select { appearance: none; width: 100%; height: 100%; padding: 0 23px 0 0; border: 1px solid #adadad; border-radius: 0; background: #dcdcdc; text-align: center; }
.filter::after { content: ""; position: absolute; right: 5px; top: 6px; width: 9px; height: 8px; background: #7c7c7c; clip-path: polygon(0 0, 100% 0, 50% 100%); }
.pick select { appearance: none; width: 100%; height: 100%; padding: 0 4px; border: 1px solid #adadad; border-radius: 0; background: #e1e1e1; }
.pick svg { position: absolute; right: 3px; top: 7px; width: 10px; height: 7px; }
.sources { position: absolute; right: 0; top: 17px; width: 95px; background: #c0c0c0; }
.band { display: flex; align-items: center; height: 30px; background: #dfdfdf; }
.added { width: 110px; height: 20px; margin-left: 6px; border: 1px solid #bcbcbc; background: #cacaca; color: #5c5c5c; }
.rows { display: flex; flex-direction: column; height: 194px; padding: 9px 0 0 19px; gap: 7px; }
.row { display: flex; align-items: center; gap: 4px; height: 21px; }
.del { width: 21px; height: 21px; background: #c0c0c0; display: grid; place-items: center; }
.del::before { content: ""; width: 9px; height: 10px; background: linear-gradient(48deg, transparent 46%, #eee 46% 54%, transparent 54%), linear-gradient(-48deg, transparent 46%, #eee 46% 54%, transparent 54%); }
.name { width: 152px; padding-left: 3px; }
.row .box { width: 53px; }
.row .spin { width: 67px; }
.actuator { width: 121px; margin: auto 0 0 16px; background: #d3d3d3; }
.foot { display: flex; gap: 4px; height: 72px; padding: 22px 0 0 229px; background: #d3d3d3; }
.stat { width: 52px; text-align: center; }
.stat.big { width: 80px; }
.stat .box { display: block; width: 100%; }
.checks { flex: 1; display: flex; flex-direction: column; justify-content: space-between; height: 112px; margin: 5px 0 0 20px; }
.checks label { display: flex; align-items: center; gap: 1px; height: 14px; }
```
